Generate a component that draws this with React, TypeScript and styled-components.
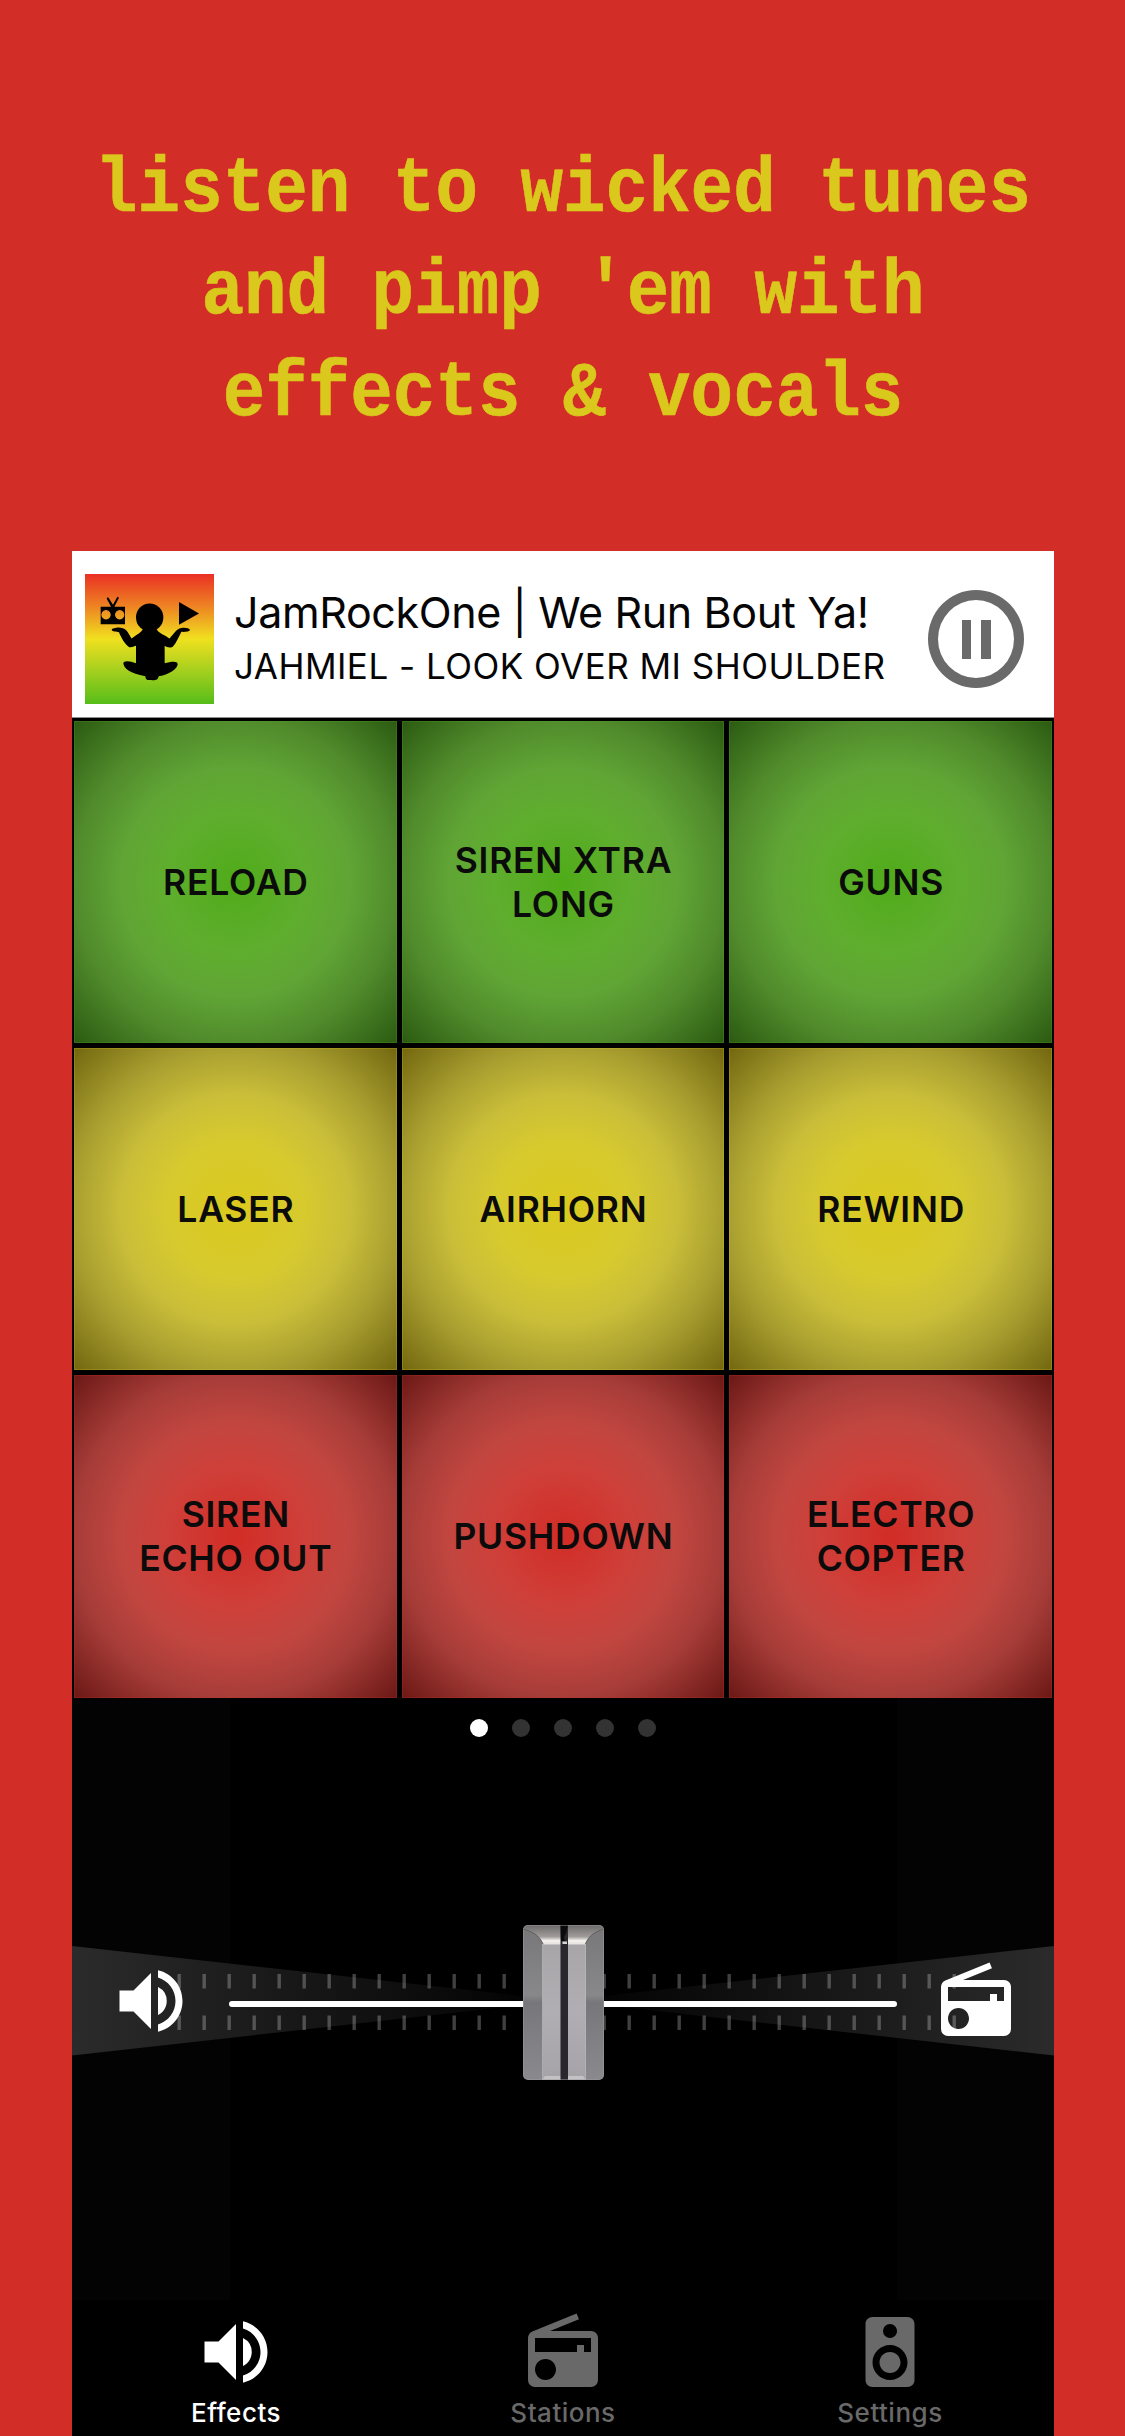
import React from "react";
import styled, { createGlobalStyle } from "styled-components";
import { MdRadio, MdSpeaker, MdVolumeUp } from "react-icons/md";

const GlobalStyle = createGlobalStyle`
  * { box-sizing: border-box; }
  body {
    margin: 0;
    background: #d22d27;
    font-family: Inter, "Liberation Sans", sans-serif;
  }
`;

const Page = styled.div`
  display: flex;
  flex-direction: column;
  align-items: center;
  width: 1125px;
  height: 2436px;
  padding-left: 1px;
  overflow: hidden;
  background: #d22d27;
`;

const Headline = styled.h1`
  flex: none;
  width: 1124px;
  height: 551px;
  margin: 0;
  padding-top: 140px;
  color: #dac91c;
  font: 700 78.5px/102px "Liberation Mono", monospace;
  text-align: center;
  white-space: pre;
  transform: scaleX(0.903);
  -webkit-text-stroke: 0.6px #dac91c;
`;

const Phone = styled.main`
  flex: 1;
  display: flex;
  flex-direction: column;
  width: 982px;
  background: #000;
`;

const Player = styled.header`
  flex: none;
  display: flex;
  align-items: center;
  height: 167px;
  padding: 10px 30px 0 13px;
  border-bottom: 1px solid #8d8f8c;
  background: #fff;
`;

const Cover = styled.svg`
  flex: none;
  width: 129px;
  height: 130px;
`;

const TrackInfo = styled.div`
  flex: 1;
  margin: -6px 0 0 20px;
  color: #050505;
  white-space: nowrap;
`;

const StationName = styled.div`
  font-size: 43px;
  line-height: 50px;
  letter-spacing: -0.38px;
`;

const TrackName = styled.div`
  margin-top: 9px;
  font-size: 35px;
  line-height: 40px;
  letter-spacing: 0.48px;
`;

const PauseButton = styled.button`
  display: flex;
  align-items: center;
  justify-content: center;
  gap: 10px;
  width: 96px;
  height: 98px;
  padding: 0;
  border: 10px solid #6a6a6a;
  border-radius: 50%;
  background: transparent;
`;

const PauseBar = styled.span`
  width: 9.5px;
  height: 39px;
  background: #6a6a6a;
`;

const PadGrid = styled.section`
  flex: none;
  display: grid;
  grid-template-columns: repeat(3, 1fr);
  grid-auto-rows: 322.2px;
  gap: 5px;
  padding: 3px 2px 0;
`;

const palettes = {
  green: ["#4fab18", "#5fae2e", "#60a535", "#518b2c", "#2b5a11"],
  yellow: ["#dbc91d", "#d7ca2e", "#cabe39", "#a99f30", "#72670f"],
  red: ["#d22c26", "#cf3f39", "#c24640", "#a63c38", "#6b1815"],
};
type Tone = keyof typeof palettes;

const Pad = styled.button<{ $tone: Tone }>`
  display: flex;
  align-items: center;
  justify-content: center;
  padding: 2px 0 0 1px;
  border: 0;
  background: ${({ $tone }) => {
    const [a, b, c, d, e] = palettes[$tone];
    return `radial-gradient(circle, ${a} 0%, ${b} 30%, ${c} 50%, ${d} 71%, ${e} 100%)`;
  }};
  box-shadow: inset 0 0 0 1px ${({ $tone }) => palettes[$tone][0]}40;
  color: #0a0b0a;
  font: 600 35.5px/44px Inter, "Liberation Sans", sans-serif;
  letter-spacing: 0.75px;
  text-align: center;
  white-space: pre;
`;

const Deck = styled.section`
  flex: none;
  display: flex;
  flex-direction: column;
  height: 602px;
  background: linear-gradient(90deg, #030303 158px, #000 158px, #000 825px, #030303 825px);
`;

const Pager = styled.div`
  display: flex;
  justify-content: center;
  gap: 23.4px;
  margin-top: 21px;
`;

const PageDot = styled.span<{ $active: boolean }>`
  width: 18.5px;
  height: 18.5px;
  border-radius: 50%;
  background: ${({ $active }) => ($active ? "#fff" : "#333")};
`;

const Fader = styled.div`
  display: grid;
  height: 155px;
  margin-top: 187px;
  > * { grid-area: 1 / 1; }
`;

const Scale = styled.svg`
  width: 982px;
  height: 155px;
`;

const FaderRow = styled.div`
  display: flex;
  align-items: center;
  justify-content: space-between;
  height: 153px;
  padding: 0 36.5px;
  color: #fff;
`;

const Rail = styled.div`
  align-self: center;
  justify-self: center;
  display: flex;
  align-items: center;
  justify-content: center;
  width: 668px;
  height: 6px;
  margin-top: 4px;
  border-radius: 3px;
  background: #fff;
`;

const Knob = styled.svg`
  flex: none;
  width: 81px;
  height: 155px;
  margin-top: -3px;
`;

const TabBar = styled.nav`
  flex: 1;
  display: grid;
  grid-template-columns: repeat(3, 327px);
  justify-content: center;
  padding-top: 10px;
`;

const Tab = styled.a<{ $active?: boolean }>`
  display: flex;
  flex-direction: column;
  align-items: center;
  color: ${({ $active }) => ($active ? "#fff" : "#696969")};
  font-size: 26px;
  font-weight: 500;
  line-height: 32px;
  letter-spacing: 0.5px;
  > span { margin-top: 3px; }
`;

const pads: { label: string; tone: Tone }[] = [
  { label: "RELOAD", tone: "green" },
  { label: "SIREN XTRA\nLONG", tone: "green" },
  { label: "GUNS", tone: "green" },
  { label: "LASER", tone: "yellow" },
  { label: "AIRHORN", tone: "yellow" },
  { label: "REWIND", tone: "yellow" },
  { label: "SIREN\nECHO OUT", tone: "red" },
  { label: "PUSHDOWN", tone: "red" },
  { label: "ELECTRO\nCOPTER", tone: "red" },
];

const ticks = Array.from({ length: 32 }, (_, i) => 105.5 + i * 25);

function CoverArt() {
  return (
    <Cover viewBox="15 14 387 389" preserveAspectRatio="none">
      <defs>
        <linearGradient id="rasta" x1="0" y1="0" x2="0" y2="1">
          <stop offset="0" stopColor="#ea3024" />
          <stop offset="0.25" stopColor="#ee8423" />
          <stop offset="0.5" stopColor="#f0e01f" />
          <stop offset="0.75" stopColor="#a3cf1e" />
          <stop offset="1" stopColor="#56bd19" />
        </linearGradient>
      </defs>
      <rect x="15" y="14" width="387" height="389" fill="url(#rasta)" />
      <path
        fillRule="evenodd"
        d="M62 112H93L80 87L84 83L99 106L112 82L117 85L103 112H135V164H62ZM78 122a14 14 0 1 0 .1 0ZM119 122a14 14 0 1 0 .1 0Z"
      />
      <path d="M297 98L357 132L297 166Z" />
      <ellipse cx="209" cy="144" rx="41" ry="42" />
      <path d="M190 176C185 190 168 195 155 207C145 192 142 180 128 176C115 172 97 176 95 181C97 187 110 187 117 188C124 205 135 225 148 233C155 235 165 230 168 229V281C150 274 130 272 130 282C132 297 150 312 196 320C197 334 206 331 213 331C222 333 234 333 236 320C270 314 292 298 293 284C293 273 272 276 254 281V229C262 236 275 235 279 231C290 220 296 202 304 187C315 188 329 187 330 181C328 174 308 173 298 177C284 184 281 195 268 207C258 197 235 192 228 176Z" />
    </Cover>
  );
}

function FaderScale() {
  return (
    <Scale viewBox="0 0 982 155">
      <defs>
        <linearGradient id="wedge" gradientUnits="userSpaceOnUse" x1="0" y1="0" x2="982" y2="0">
          <stop offset="0" stopColor="#2b2b2b" />
          <stop offset="0.5" stopColor="#000" />
          <stop offset="1" stopColor="#2b2b2b" />
        </linearGradient>
      </defs>
      <path d="M0 22L491 76.5L0 131.500ZM982 22L491 76.500L982 131.500Z" fill="url(#wedge)" />
      {ticks.map((x) => (
        <path key={x} d={`M${x} 50h3.4v14.500h-3.4zM${x} 91.500h3.4v14.500h-3.4z`} fill="#fff" opacity="0.25" />
      ))}
    </Scale>
  );
}

function FaderKnob() {
  return (
    <Knob viewBox="0 0 81 155">
      <defs>
        <clipPath id="cap">
          <rect width="81" height="155" rx="5" />
        </clipPath>
        <linearGradient id="side" x1="0" y1="0" x2="0" y2="1">
          <stop offset="0" stopColor="#77777a" />
          <stop offset="0.45" stopColor="#88888b" />
          <stop offset="0.5" stopColor="#77777b" />
          <stop offset="1" stopColor="#8a8a8e" />
        </linearGradient>
        <linearGradient id="bevel" x1="0" y1="0" x2="0" y2="1">
          <stop offset="0" stopColor="#6b6869" />
          <stop offset="0.6" stopColor="#a09c9b" />
          <stop offset="0.8" stopColor="#f5f1ed" />
          <stop offset="1" stopColor="#e2dfde" />
        </linearGradient>
        <linearGradient id="face" x1="0" y1="0" x2="0" y2="1">
          <stop offset="0" stopColor="#a7a5a8" />
          <stop offset="0.5" stopColor="#b1aeb3" />
          <stop offset="1" stopColor="#a5a3a8" />
        </linearGradient>
      </defs>
      <g clipPath="url(#cap)">
        <rect width="81" height="155" fill="url(#side)" />
        <rect x="19.5" y="15" width="43.5" height="140" fill="url(#face)" />
        <path d="M0 0H81V4C72 7 66 10 62 19.5H20.5C16 10 10 7 0 4Z" fill="url(#bevel)" />
        <path d="M0 4C10 7 16 10 20 19M81 4C72 7 66 10 62.5 19" fill="none" stroke="#5f5d5f" strokeWidth="1" />
        <path d="M22 151H60L63 155H19Z" fill="#c4c2c5" />
        <path d="M19.5 19V155M62.5 19V155" stroke="#b9b7ba" strokeWidth="0.7" />
        <rect x="37.5" width="7.5" height="155" fill="#29262d" />
        <path d="M37.5 0H45L43 8L41 12L42 16H38Z" fill="#0b0a0b" />
        <rect x="39.5" y="16.5" width="4.5" height="2.5" fill="#d8d5d4" />
        <rect x="0.5" y="0.5" width="80" height="154" rx="4.5" fill="none" stroke="#9b9b9e" strokeOpacity="0.5" />
      </g>
    </Knob>
  );
}

export default function App() {
  return (
    <>
      <GlobalStyle />
      <Page>
        <Headline>{"listen to wicked tunes\nand pimp 'em with\neffects & vocals"}</Headline>
        <Phone>
          <Player>
            <CoverArt />
            <TrackInfo>
              <StationName>JamRockOne | We Run Bout Ya!</StationName>
              <TrackName>JAHMIEL - LOOK OVER MI SHOULDER</TrackName>
            </TrackInfo>
            <PauseButton aria-label="Pause">
              <PauseBar />
              <PauseBar />
            </PauseButton>
          </Player>
          <PadGrid>
            {pads.map((pad) => (
              <Pad key={pad.label} $tone={pad.tone}>
                {pad.label}
              </Pad>
            ))}
          </PadGrid>
          <Deck>
            <Pager>
              {[0, 1, 2, 3, 4].map((n) => (
                <PageDot key={n} $active={n === 0} />
              ))}
            </Pager>
            <Fader>
              <FaderScale />
              <FaderRow>
                <MdVolumeUp size={84} />
                <MdRadio size={84} />
              </FaderRow>
              <Rail>
                <FaderKnob />
              </Rail>
            </Fader>
          </Deck>
          <TabBar>
            <Tab $active>
              <MdVolumeUp size={84} />
              <span>Effects</span>
            </Tab>
            <Tab>
              <MdRadio size={84} />
              <span>Stations</span>
            </Tab>
            <Tab>
              <MdSpeaker size={84} />
              <span>Settings</span>
            </Tab>
          </TabBar>
        </Phone>
      </Page>
    </>
  );
}
